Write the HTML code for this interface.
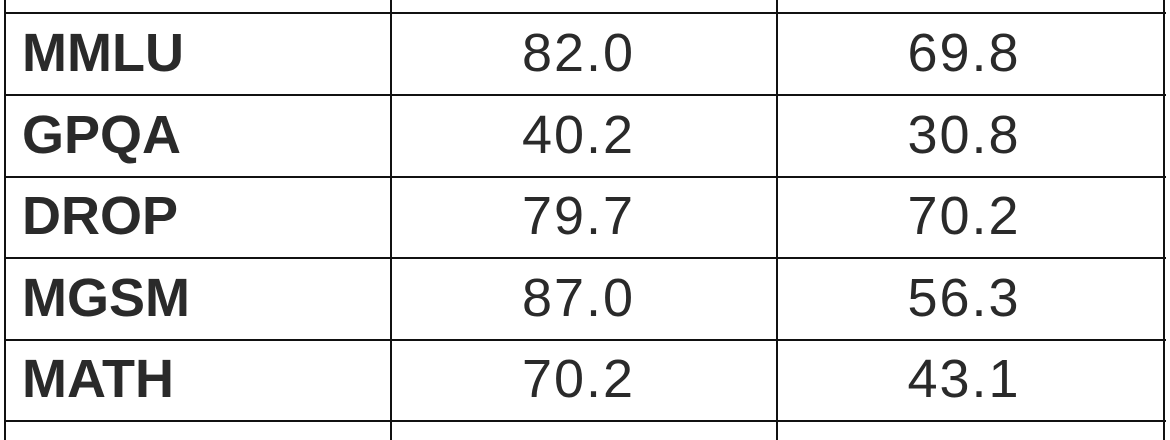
<!DOCTYPE html>
<html><head><style>
html,body{margin:0;padding:0;background:#fff;width:1170px;height:440px;overflow:hidden}
.v{position:absolute;top:0;height:440px;width:2px;background:#111}
.h{position:absolute;left:4px;width:1162px;height:2px;background:#111}
.t{position:absolute;font-family:"Liberation Sans",sans-serif;font-size:54px;color:#2a2a2a;line-height:82px;height:82px}
.b{font-weight:bold;left:22px}
.c1{left:387px;width:383px;text-align:center;letter-spacing:2px}
.c2{left:772px;width:384px;text-align:center;letter-spacing:2px}
</style></head><body>
<div class="v" style="left:4px"></div>
<div class="v" style="left:390px"></div>
<div class="v" style="left:776px"></div>
<div class="v" style="left:1163px"></div>
<div class="h" style="top:12px"></div>
<div class="h" style="top:94px"></div>
<div class="h" style="top:176px"></div>
<div class="h" style="top:257px"></div>
<div class="h" style="top:339px"></div>
<div class="h" style="top:420px"></div>

<div class="t b" style="top:12px">MMLU</div><div class="t c1" style="top:12px">82.0</div><div class="t c2" style="top:12px">69.8</div>
<div class="t b" style="top:94px">GPQA</div><div class="t c1" style="top:94px">40.2</div><div class="t c2" style="top:94px">30.8</div>
<div class="t b" style="top:175px">DROP</div><div class="t c1" style="top:175px">79.7</div><div class="t c2" style="top:175px">70.2</div>
<div class="t b" style="top:257px">MGSM</div><div class="t c1" style="top:257px">87.0</div><div class="t c2" style="top:257px">56.3</div>
<div class="t b" style="top:338px">MATH</div><div class="t c1" style="top:338px">70.2</div><div class="t c2" style="top:338px">43.1</div>
</body></html>
